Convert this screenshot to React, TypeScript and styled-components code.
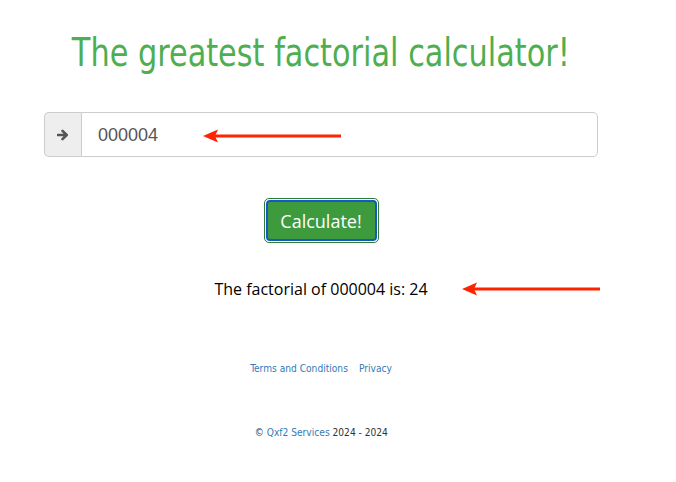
import React from "react";
import styled, { createGlobalStyle } from "styled-components";

const Global = createGlobalStyle`
  html, body { margin: 0; padding: 0; background: #fff; }
  body { font-family: "Open Sans", "Noto Sans", sans-serif; color: #000; }
`;

const Page = styled.div`
  width: 554px;
  padding-left: 44px;
  display: flex;
  flex-direction: column;
  align-items: center;
`;

const Title = styled.h1`
  margin: 29px 0 0 0;
  font-family: "DejaVu Sans Condensed", "DejaVu Sans", sans-serif;
  font-weight: 400;
  font-size: 39px;
  line-height: 48px;
  color: #4fae4f;
  white-space: nowrap;
  transform: scaleX(0.865);
`;

const InputGroup = styled.div`
  position: relative;
  margin-top: 35px;
  width: 100%;
  height: 45px;
  display: flex;
  box-sizing: border-box;
`;

const Addon = styled.div`
  width: 37px;
  box-sizing: border-box;
  background: #eeeeee;
  border: 1px solid #cccccc;
  border-right: none;
  border-radius: 5px 0 0 5px;
  display: flex;
  align-items: center;
  justify-content: center;
  padding-top: 1px;
`;

const Field = styled.div`
  flex: 1;
  box-sizing: border-box;
  border: 1px solid #cccccc;
  border-radius: 0 5px 5px 0;
  padding: 2px 16px 0 16px;
  display: flex;
  align-items: center;
  font-family: "Liberation Sans", Arial, sans-serif;
  font-size: 18px;
  color: #555555;
`;

const Arrow = styled.svg<{ $left: number; $top: number }>`
  position: absolute;
  left: ${(p) => p.$left}px;
  top: ${(p) => p.$top}px;
`;

const ButtonRing = styled.div`
  margin-top: 41px;
  border: 1px solid #2e7d32;
  border-radius: 5px;
  padding: 1px;
  background: #fff;
`;

const Button = styled.button`
  display: block;
  box-sizing: border-box;
  width: 111px;
  height: 41px;
  background: #3d9b3d;
  border: 2px solid #1458c8;
  border-radius: 4px;
  color: #fff;
  font-family: "Open Sans", "Noto Sans", sans-serif;
  font-size: 18px;
  padding: 0;
`;

const ResultRow = styled.div`
  position: relative;
  margin-top: 34px;
  font-family: "Open Sans", "Noto Sans", sans-serif;
  font-size: 16px;
  line-height: 24px;
  color: #000;
`;

const Links = styled.div`
  margin-top: 60px;
  display: flex;
  gap: 12px;
  font-family: "DejaVu Sans Condensed", "DejaVu Sans", sans-serif;
  font-size: 11px;
  line-height: 16px;
  transform: scaleX(0.92);
`;

const Link = styled.a`
  color: #337ab7;
  text-decoration: none;
`;

const Copy = styled.div`
  margin-top: 48px;
  font-family: "DejaVu Sans Condensed", "DejaVu Sans", sans-serif;
  font-size: 11px;
  line-height: 16px;
  color: #333;
  transform: scaleX(0.92);
`;

const RedArrow = ({ left, top, width }: { left: number; top: number; width: number }) => (
  <Arrow $left={left} $top={top} width={width} height={14} viewBox={`0 0 ${width} 14`}>
    <rect x={10} y={5.5} width={width - 10} height={3} fill="#ff2200" />
    <polygon points="0,7 15,0.5 12,7 15,13.5" fill="#ff2200" />
  </Arrow>
);

export default function App() {
  return (
    <>
      <Global />
      <Page>
        <Title>The greatest factorial calculator!</Title>
        <InputGroup>
          <Addon>
            <svg width="12" height="12" viewBox="0 0 12 12">
              <path
                d="M1 6h8.5M5.5 1.8L9.7 6 5.5 10.2"
                fill="none"
                stroke="#555"
                strokeWidth="2.6"
                strokeLinecap="round"
                strokeLinejoin="round"
              />
            </svg>
          </Addon>
          <Field>000004</Field>
          <RedArrow left={159} top={17} width={138} />
        </InputGroup>
        <ButtonRing>
          <Button>Calculate!</Button>
        </ButtonRing>
        <ResultRow>
          The factorial of 000004 is: 24
          <RedArrow left={248} top={5} width={138} />
        </ResultRow>
        <Links>
          <Link href="#">Terms and Conditions</Link>
          <Link href="#">Privacy</Link>
        </Links>
        <Copy>
          © <Link href="#">Qxf2 Services</Link> 2024 - 2024
        </Copy>
      </Page>
    </>
  );
}
